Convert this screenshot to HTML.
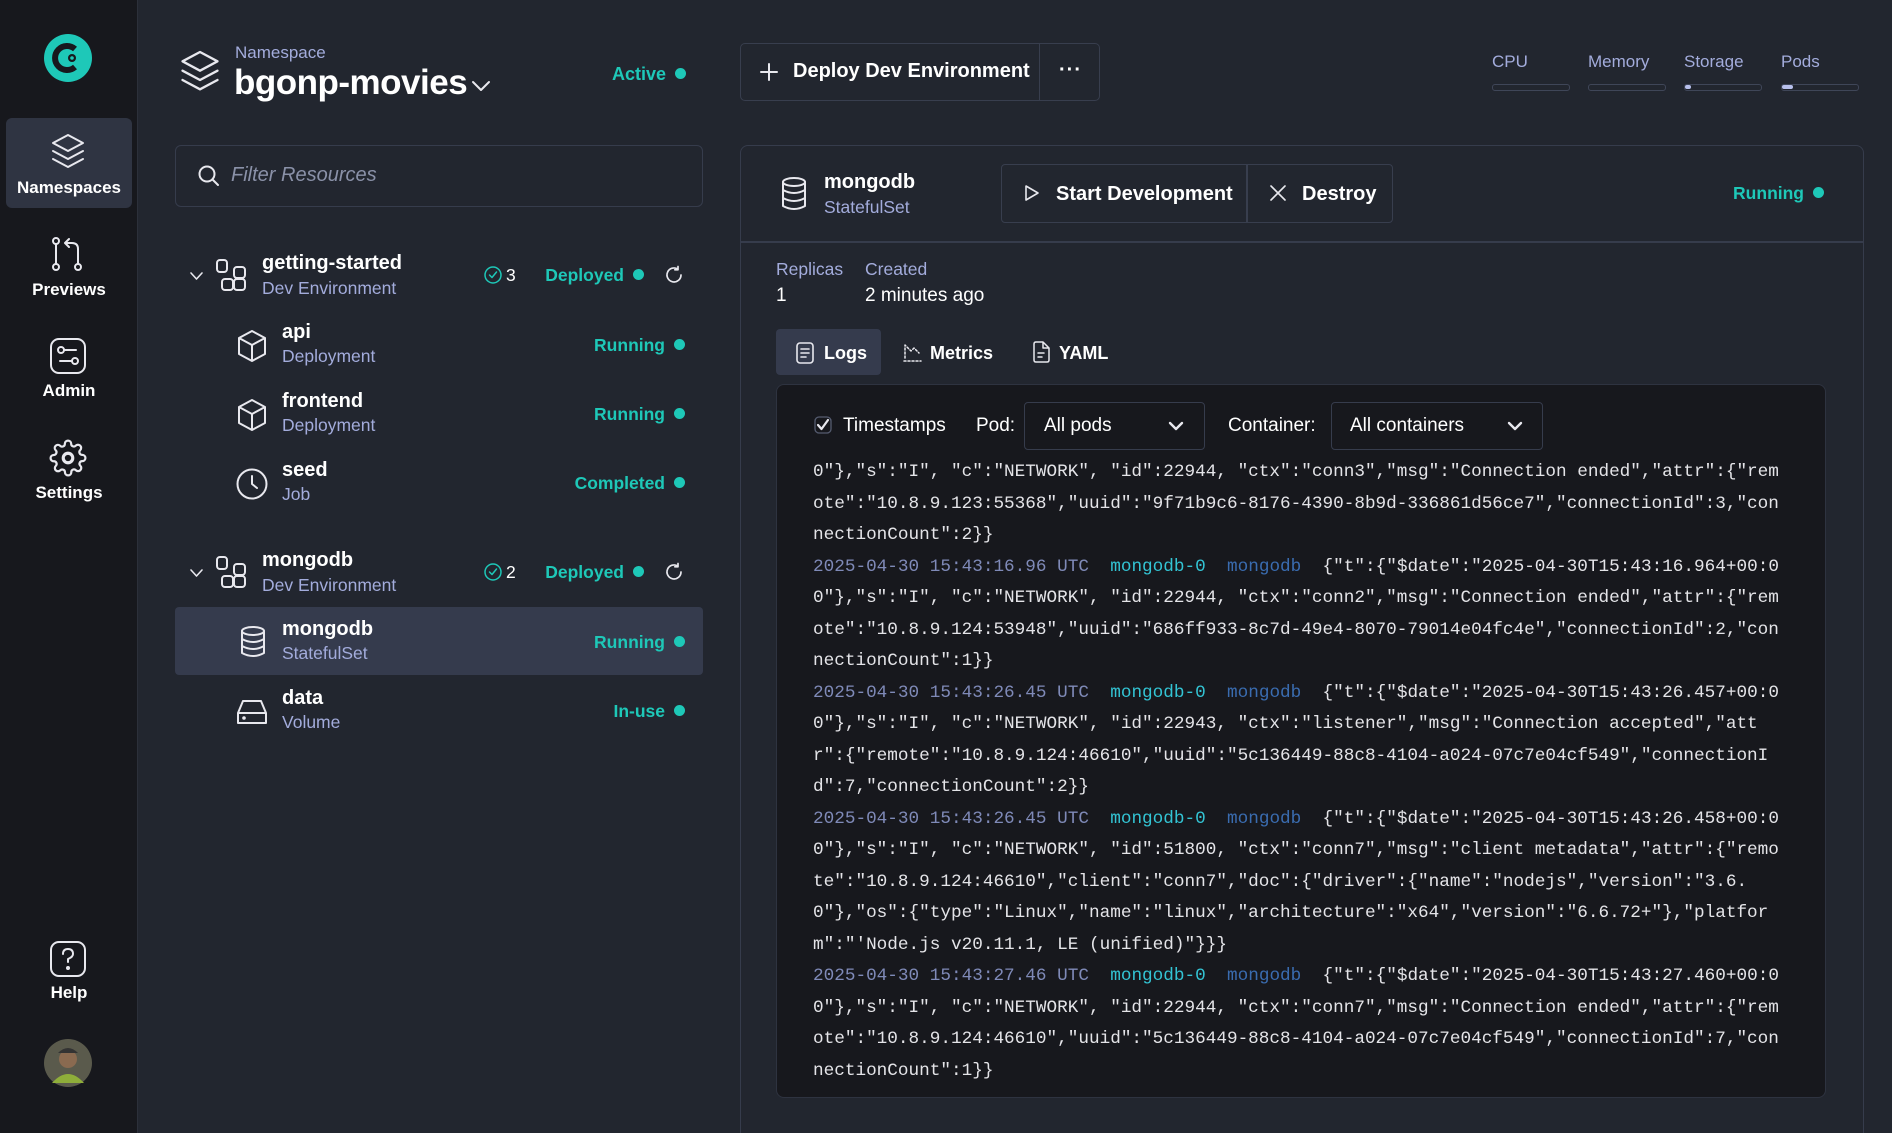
<!DOCTYPE html>
<html><head><meta charset="utf-8">
<style>
*{margin:0;padding:0;box-sizing:border-box}
html{overflow:hidden}
body{width:1892px;height:1133px;overflow:hidden;background:#22262f;font-family:"Liberation Sans",sans-serif;color:#fff;position:relative}
.a{position:absolute}
.side{left:0;top:0;width:138px;height:1133px;background:#17181d;border-right:1px solid #2c303a}
.nav{left:0;width:138px;text-align:center;font-weight:bold;font-size:17px;color:#fff}
.lav{color:#a3acdc}
.teal{color:#1ec8b8;font-weight:bold}
.dot{display:inline-block;width:11px;height:11px;border-radius:50%;background:#1ec8b8;margin-left:9px;vertical-align:1px}
.t1{font-weight:bold;font-size:20px}
.t2{font-size:17.5px;color:#a3acdc}
.st{font-size:17.5px;text-align:right;width:200px;font-weight:bold;color:#1ec8b8}
svg{position:absolute;overflow:visible}
.ic{fill:none;stroke:#e8e8ee;stroke-width:2;stroke-linecap:round;stroke-linejoin:round}
pre{font-family:"Liberation Mono",monospace;font-size:17.7px;line-height:31.5px;color:#e4e4e8}
.ts{color:#7f8ab8}.pd{color:#33c4d4}.cn{color:#3a6cb0}
</style></head><body>
<div class="a side"></div>
<svg style="left:44px;top:34px" width="48" height="48" viewBox="0 0 48 48"><circle cx="24" cy="24" r="24" fill="#1ec8b8"/><path d="M31 15 A12 12 0 1 0 31 33" fill="none" stroke="#17181d" stroke-width="6"/><circle cx="28" cy="24" r="4" fill="#17181d"/><circle cx="28" cy="24" r="1.8" fill="#1ec8b8"/></svg>
<div class="a" style="left:6px;top:118px;width:126px;height:90px;background:#2f3442;border-radius:6px"></div>
<svg class="ic" style="left:50px;top:133px" width="36" height="38" viewBox="0 0 36 38"><path d="M18 2 L33 10 L18 18 L3 10Z"/><path d="M3 18 L18 26 L33 18"/><path d="M3 26 L18 34 L33 26"/></svg>
<div class="a nav" style="top:178px">Namespaces</div>
<svg class="ic" style="left:50px;top:237px" width="36" height="36" viewBox="0 0 36 36"><circle cx="6" cy="4" r="3"/><circle cx="6" cy="30" r="3"/><path d="M6 7 V27"/><circle cx="28" cy="30" r="3"/><path d="M28 27 V12 Q28 6 22 6 H15 M19 2 L15 6 L19 10"/></svg>
<div class="a nav" style="top:280px">Previews</div>
<svg class="ic" style="left:49px;top:337px" width="38" height="38" viewBox="0 0 38 38"><rect x="2" y="2" width="34" height="34" rx="8"/><circle cx="12" cy="13" r="3"/><path d="M15 13 H27"/><circle cx="26" cy="24" r="3"/><path d="M11 24 H23"/></svg>
<div class="a nav" style="top:381px">Admin</div>
<svg class="ic" style="left:49px;top:439px" width="38" height="38" viewBox="0 0 24 24"><circle cx="12" cy="12" r="3"/><path d="M19.4 15a1.65 1.65 0 0 0 .33 1.820l.06.06a2 2 0 1 1-2.83 2.83l-.06-.06a1.65 1.65 0 0 0-1.82-.33 1.65 1.65 0 0 0-1 1.51V21a2 2 0 1 1-4 0v-.09A1.65 1.65 0 0 0 9 19.4a1.65 1.65 0 0 0-1.82.33l-.06.06a2 2 0 1 1-2.830-2.83l.06-.06a1.65 1.65 0 0 0 .33-1.82 1.65 1.65 0 0 0-1.51-1H3a2 2 0 1 1 0-4h.09A1.65 1.65 0 0 0 4.6 9a1.65 1.65 0 0 0-.33-1.82l-.06-.06a2 2 0 1 1 2.83-2.83l.06.06a1.65 1.65 0 0 0 1.82.33H9a1.65 1.65 0 0 0 1-1.51V3a2 2 0 1 1 4 0v.09a1.65 1.65 0 0 0 1 1.51 1.65 1.65 0 0 0 1.82-.33l.06-.06a2 2 0 1 1 2.83 2.83l-.06.06a1.65 1.65 0 0 0-.33 1.82V9a1.65 1.65 0 0 0 1.51 1H21a2 2 0 1 1 0 4h-.09a1.65 1.65 0 0 0-1.51 1z" stroke-width="1.4"/></svg>
<div class="a nav" style="top:483px">Settings</div>
<svg class="ic" style="left:49px;top:940px" width="38" height="38" viewBox="0 0 38 38"><rect x="2" y="2" width="34" height="34" rx="8"/><path d="M14 14 Q14 9 19 9 Q24 9 24 14 Q24 17 19 19 V22"/><circle cx="19" cy="28" r="1" fill="#e8e8ee"/></svg>
<div class="a nav" style="top:983px">Help</div>
<svg style="left:44px;top:1039px" width="48" height="48" viewBox="0 0 48 48"><circle cx="24" cy="24" r="24" fill="#5a5a4c"/><circle cx="24" cy="20" r="9" fill="#8a6a50"/><path d="M8 44 Q24 26 40 44" fill="#8fae3a"/><path d="M14 14 Q24 4 34 14" fill="#333"/></svg>

<svg class="ic" style="left:179px;top:49px" width="42" height="48" viewBox="0 0 36 40"><path d="M18 2 L33 10 L18 18 L3 10Z"/><path d="M3 18 L18 26 L33 18"/><path d="M3 26 L18 34 L33 26"/></svg>
<div class="a lav" style="left:235px;top:43px;font-size:17px">Namespace</div>
<div class="a" style="left:234px;top:63px;font-size:35px;font-weight:bold;letter-spacing:-0.5px">bgonp-movies</div>
<svg class="ic" style="left:472px;top:81px" width="18" height="10" viewBox="0 0 18 10"><path d="M1 1 L9 9 L17 1"/></svg>
<div class="a teal" style="left:596px;top:64px;font-size:18px;width:90px;text-align:right">Active<span class="dot"></span></div>

<div class="a" style="left:740px;top:43px;width:360px;height:58px;border:1px solid #383e4e;border-radius:5px"></div>
<div class="a" style="left:1039px;top:43px;width:1px;height:58px;background:#383e4e"></div>
<svg class="ic" style="left:760px;top:63px" width="18" height="18" viewBox="0 0 18 18"><path d="M9 1 V17 M1 9 H17"/></svg>
<div class="a t1" style="left:793px;top:60px;font-size:20px">Deploy Dev Environment</div>
<div class="a" style="left:1059px;top:59px;font-size:20px;font-weight:bold;letter-spacing:1px">···</div>

<div class="a lav" style="left:1492px;top:52px;font-size:17px">CPU</div>
<div class="a lav" style="left:1588px;top:52px;font-size:17px">Memory</div>
<div class="a lav" style="left:1684px;top:52px;font-size:17px">Storage</div>
<div class="a lav" style="left:1781px;top:52px;font-size:17px">Pods</div>
<div class="a" style="left:1492px;top:84px;width:78px;height:7px;border:1.5px solid #3f4658;border-radius:3px"></div>
<div class="a" style="left:1588px;top:84px;width:78px;height:7px;border:1.5px solid #3f4658;border-radius:3px"></div>
<div class="a" style="left:1684px;top:84px;width:78px;height:7px;border:1.5px solid #3f4658;border-radius:3px"><div style="width:6px;height:4px;background:#b8c0ec;border-radius:2px"></div></div>
<div class="a" style="left:1781px;top:84px;width:78px;height:7px;border:1.5px solid #3f4658;border-radius:3px"><div style="width:11px;height:4px;background:#b8c0ec;border-radius:2px"></div></div>

<div class="a" style="left:175px;top:145px;width:528px;height:62px;border:1.5px solid #363c4c;border-radius:6px"></div>
<svg class="ic" style="left:198px;top:165px" width="22" height="22" viewBox="0 0 22 22"><circle cx="9" cy="9" r="7.5"/><path d="M14.5 14.5 L20 20"/></svg>
<div class="a" style="left:231px;top:164px;font-size:20px;font-style:italic;color:#8a91a8">Filter Resources</div>

<svg class="ic" style="left:190px;top:272px" width="13" height="8" viewBox="0 0 13 8"><path d="M1 1 L6.5 7 L12 1" stroke-width="1.6"/></svg>
<svg class="ic" style="left:216px;top:259px" width="32" height="34" viewBox="0 0 32 34"><rect x="1" y="1" width="10" height="12" rx="3"/><rect x="18" y="8" width="11" height="11" rx="3"/><rect x="6" y="20" width="11" height="11" rx="3"/><rect x="18" y="20" width="11" height="11" rx="3"/></svg>
<div class="a t1" style="left:262px;top:252px">getting-started</div>
<div class="a t2" style="left:262px;top:278px">Dev Environment</div>
<svg class="ic" style="left:484px;top:266px" width="18" height="18" viewBox="0 0 18 18"><circle cx="9" cy="9" r="8" stroke="#1ec8b8" stroke-width="1.5"/><path d="M5.5 9 L8 11.5 L12.5 6" stroke="#1ec8b8" stroke-width="1.5"/></svg>
<div class="a" style="left:506px;top:265px;font-size:17.5px">3</div>
<div class="a st" style="left:444px;top:265px">Deployed<span class="dot"></span></div>
<svg class="ic" style="left:665px;top:266px" width="18" height="18" viewBox="0 0 18 18"><path d="M16 9 A7 7 0 1 1 13 3.2 M13 0.5 V3.8 H9.8" stroke-width="1.7"/></svg>

<svg class="ic" style="left:237px;top:330px" width="30" height="32" viewBox="0 0 30 32"><path d="M15 1 L28 8 V24 L15 31 L2 24 V8Z M2 8 L15 15 L28 8 M15 15 V31"/></svg>
<div class="a t1" style="left:282px;top:321px">api</div>
<div class="a t2" style="left:282px;top:346px">Deployment</div>
<div class="a st" style="left:485px;top:335px">Running<span class="dot"></span></div>

<svg class="ic" style="left:237px;top:399px" width="30" height="32" viewBox="0 0 30 32"><path d="M15 1 L28 8 V24 L15 31 L2 24 V8Z M2 8 L15 15 L28 8 M15 15 V31"/></svg>
<div class="a t1" style="left:282px;top:390px">frontend</div>
<div class="a t2" style="left:282px;top:415px">Deployment</div>
<div class="a st" style="left:485px;top:404px">Running<span class="dot"></span></div>

<svg class="ic" style="left:236px;top:468px" width="32" height="32" viewBox="0 0 32 32"><circle cx="16" cy="16" r="14.5"/><path d="M16 8 V16 L21 20"/></svg>
<div class="a t1" style="left:282px;top:459px">seed</div>
<div class="a t2" style="left:282px;top:484px">Job</div>
<div class="a st" style="left:485px;top:473px">Completed<span class="dot"></span></div>

<svg class="ic" style="left:190px;top:569px" width="13" height="8" viewBox="0 0 13 8"><path d="M1 1 L6.5 7 L12 1" stroke-width="1.6"/></svg>
<svg class="ic" style="left:216px;top:556px" width="32" height="34" viewBox="0 0 32 34"><rect x="1" y="1" width="10" height="12" rx="3"/><rect x="18" y="8" width="11" height="11" rx="3"/><rect x="6" y="20" width="11" height="11" rx="3"/><rect x="18" y="20" width="11" height="11" rx="3"/></svg>
<div class="a t1" style="left:262px;top:549px">mongodb</div>
<div class="a t2" style="left:262px;top:575px">Dev Environment</div>
<svg class="ic" style="left:484px;top:563px" width="18" height="18" viewBox="0 0 18 18"><circle cx="9" cy="9" r="8" stroke="#1ec8b8" stroke-width="1.5"/><path d="M5.5 9 L8 11.5 L12.5 6" stroke="#1ec8b8" stroke-width="1.5"/></svg>
<div class="a" style="left:506px;top:562px;font-size:17.5px">2</div>
<div class="a st" style="left:444px;top:562px">Deployed<span class="dot"></span></div>
<svg class="ic" style="left:665px;top:563px" width="18" height="18" viewBox="0 0 18 18"><path d="M16 9 A7 7 0 1 1 13 3.2 M13 0.5 V3.8 H9.8" stroke-width="1.7"/></svg>

<div class="a" style="left:175px;top:607px;width:528px;height:68px;background:#353b4d;border-radius:4px"></div>
<svg class="ic" style="left:240px;top:626px" width="26" height="32" viewBox="0 0 26 32"><ellipse cx="13" cy="5" rx="11" ry="4"/><path d="M2 5 V27 Q13 33 24 27 V5 M2 13 Q13 19 24 13 M2 20 Q13 26 24 20"/></svg>
<div class="a t1" style="left:282px;top:618px">mongodb</div>
<div class="a t2" style="left:282px;top:643px">StatefulSet</div>
<div class="a st" style="left:485px;top:632px">Running<span class="dot"></span></div>

<svg class="ic" style="left:236px;top:698px" width="32" height="28" viewBox="0 0 32 28"><path d="M2 15 L7 3 H25 L30 15 V25 H2Z M2 15 H30"/><circle cx="8" cy="20" r="0.8" fill="#e8e8ee"/></svg>
<div class="a t1" style="left:282px;top:687px">data</div>
<div class="a t2" style="left:282px;top:712px">Volume</div>
<div class="a st" style="left:485px;top:701px">In-use<span class="dot"></span></div>

<div class="a" style="left:740px;top:145px;width:1124px;height:1000px;border:1.5px solid #363c4c;border-radius:8px"></div>
<div class="a" style="left:740px;top:241px;width:1124px;height:1.5px;background:#363c4c"></div>
<svg class="ic" style="left:781px;top:177px" width="26" height="34" viewBox="0 0 26 34"><ellipse cx="13" cy="5" rx="11" ry="4"/><path d="M2 5 V29 Q13 35 24 29 V5 M2 13 Q13 19 24 13 M2 21 Q13 27 24 21"/></svg>
<div class="a t1" style="left:824px;top:171px">mongodb</div>
<div class="a t2" style="left:824px;top:197px">StatefulSet</div>
<div class="a" style="left:1001px;top:164px;width:392px;height:59px;border:1.5px solid #383e4e;border-radius:4px"></div>
<div class="a" style="left:1246px;top:164px;width:1.5px;height:59px;background:#383e4e"></div>
<svg class="ic" style="left:1024px;top:184px" width="16" height="18" viewBox="0 0 16 18"><path d="M2 2 L14 9 L2 16Z" stroke-width="1.6"/></svg>
<div class="a t1" style="left:1056px;top:183px">Start Development</div>
<svg class="ic" style="left:1270px;top:185px" width="16" height="16" viewBox="0 0 16 16"><path d="M1 1 L15 15 M15 1 L1 15" stroke-width="1.6"/></svg>
<div class="a t1" style="left:1302px;top:183px">Destroy</div>
<div class="a st" style="left:1624px;top:183px">Running<span class="dot"></span></div>

<div class="a t2" style="left:776px;top:259px">Replicas</div>
<div class="a" style="left:776px;top:285px;font-size:19px">1</div>
<div class="a t2" style="left:865px;top:259px">Created</div>
<div class="a" style="left:865px;top:285px;font-size:19px">2 minutes ago</div>

<div class="a" style="left:776px;top:329px;width:105px;height:46px;background:#353b4d;border-radius:4px"></div>
<svg class="ic" style="left:796px;top:342px" width="18" height="22" viewBox="0 0 18 22"><rect x="1" y="1" width="16" height="20" rx="3" stroke-width="1.6"/><path d="M5 7 H13 M5 11 H13 M5 15 H10" stroke-width="1.6"/></svg>
<div class="a" style="left:824px;top:343px;font-size:18px;font-weight:bold">Logs</div>
<svg class="ic" style="left:902px;top:341px" width="20" height="22" viewBox="0 0 20 22"><path d="M2 20 H19 M3 17 V4 L9 10 L12 7 L17 12" stroke-width="1.5" stroke-dasharray="2 2"/></svg>
<div class="a" style="left:930px;top:343px;font-size:18px;font-weight:bold">Metrics</div>
<svg class="ic" style="left:1032px;top:341px" width="18" height="22" viewBox="0 0 18 22"><path d="M2 3 Q2 1 4 1 H11 L17 7 V19 Q17 21 15 21 H4 Q2 21 2 19Z M11 1 V7 H17 M6 12 H12 M6 16 H10" stroke-width="1.5"/></svg>
<div class="a" style="left:1059px;top:343px;font-size:18px;font-weight:bold">YAML</div>

<div class="a" style="left:776px;top:384px;width:1050px;height:714px;background:#17181d;border:1.5px solid #2e3340;border-radius:8px;overflow:hidden">
 <div class="a" style="left:36px;top:-1px;width:1010px;height:711px;overflow:hidden;clip-path:inset(79px 0 0 0)">
<pre class="a" style="left:0;top:73px">0"},"s":"I", "c":"NETWORK", "id":22944, "ctx":"conn3","msg":"Connection ended","attr":{"rem
ote":"10.8.9.123:55368","uuid":"9f71b9c6-8176-4390-8b9d-336861d56ce7","connectionId":3,"con
nectionCount":2}}
<span class="ts">2025-04-30 15:43:16.96 UTC</span>  <span class="pd">mongodb-0</span>  <span class="cn">mongodb</span>  {"t":{"$date":"2025-04-30T15:43:16.964+00:0
0"},"s":"I", "c":"NETWORK", "id":22944, "ctx":"conn2","msg":"Connection ended","attr":{"rem
ote":"10.8.9.124:53948","uuid":"686ff933-8c7d-49e4-8070-79014e04fc4e","connectionId":2,"con
nectionCount":1}}
<span class="ts">2025-04-30 15:43:26.45 UTC</span>  <span class="pd">mongodb-0</span>  <span class="cn">mongodb</span>  {"t":{"$date":"2025-04-30T15:43:26.457+00:0
0"},"s":"I", "c":"NETWORK", "id":22943, "ctx":"listener","msg":"Connection accepted","att
r":{"remote":"10.8.9.124:46610","uuid":"5c136449-88c8-4104-a024-07c7e04cf549","connectionI
d":7,"connectionCount":2}}
<span class="ts">2025-04-30 15:43:26.45 UTC</span>  <span class="pd">mongodb-0</span>  <span class="cn">mongodb</span>  {"t":{"$date":"2025-04-30T15:43:26.458+00:0
0"},"s":"I", "c":"NETWORK", "id":51800, "ctx":"conn7","msg":"client metadata","attr":{"remo
te":"10.8.9.124:46610","client":"conn7","doc":{"driver":{"name":"nodejs","version":"3.6.
0"},"os":{"type":"Linux","name":"linux","architecture":"x64","version":"6.6.72+"},"platfor
m":"'Node.js v20.11.1, LE (unified)"}}}
<span class="ts">2025-04-30 15:43:27.46 UTC</span>  <span class="pd">mongodb-0</span>  <span class="cn">mongodb</span>  {"t":{"$date":"2025-04-30T15:43:27.460+00:0
0"},"s":"I", "c":"NETWORK", "id":22944, "ctx":"conn7","msg":"Connection ended","attr":{"rem
ote":"10.8.9.124:46610","uuid":"5c136449-88c8-4104-a024-07c7e04cf549","connectionId":7,"con
nectionCount":1}}</pre>
 </div>
</div>
<svg class="ic" style="left:814px;top:416px" width="18" height="18" viewBox="0 0 18 18"><rect x="1" y="1" width="16" height="16" rx="4" stroke="#555c70" stroke-width="1.3"/><path d="M4 9 L7.5 13 L14 4" stroke-width="2.2"/></svg>
<div class="a" style="left:843px;top:415px;font-size:19px">Timestamps</div>
<div class="a" style="left:976px;top:415px;font-size:19px">Pod:</div>
<div class="a" style="left:1024px;top:402px;width:181px;height:48px;border:1.5px solid #363c4c;border-radius:4px"></div>
<div class="a" style="left:1044px;top:415px;font-size:19px">All pods</div>
<svg class="ic" style="left:1168px;top:421px" width="16" height="10" viewBox="0 0 16 10"><path d="M2 2 L8 8 L14 2" stroke-width="2.4"/></svg>
<div class="a" style="left:1228px;top:415px;font-size:19px">Container:</div>
<div class="a" style="left:1331px;top:402px;width:212px;height:48px;border:1.5px solid #363c4c;border-radius:4px"></div>
<div class="a" style="left:1350px;top:415px;font-size:19px">All containers</div>
<svg class="ic" style="left:1507px;top:421px" width="16" height="10" viewBox="0 0 16 10"><path d="M2 2 L8 8 L14 2" stroke-width="2.4"/></svg>
</body></html>
